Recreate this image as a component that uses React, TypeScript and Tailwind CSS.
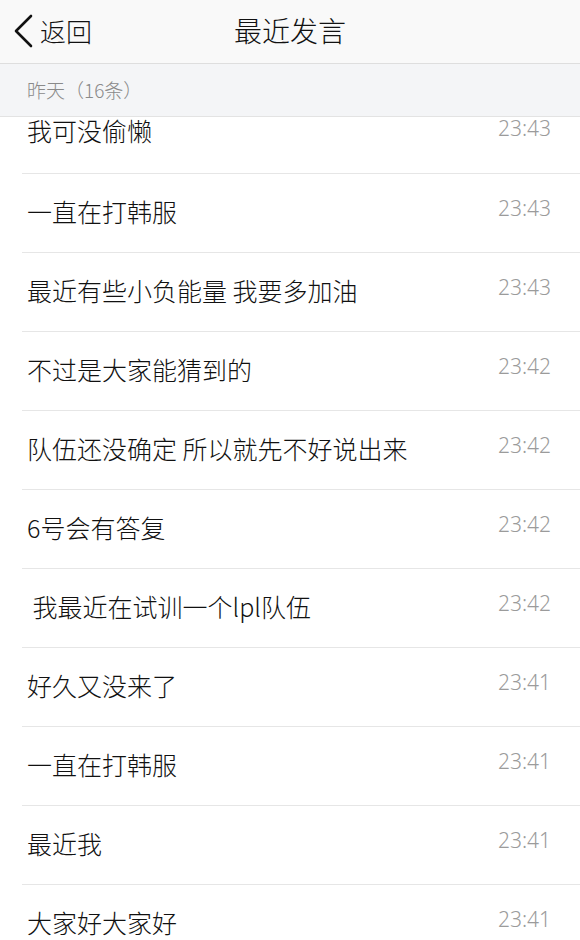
import React from "react";

const rows: { text: string; time: string }[] = [
  { text: "一直在打韩服", time: "23:43" },
  { text: "最近有些小负能量 我要多加油", time: "23:43" },
  { text: "不过是大家能猜到的", time: "23:42" },
  { text: "队伍还没确定 所以就先不好说出来", time: "23:42" },
  { text: "6号会有答复", time: "23:42" },
  { text: " 我最近在试训一个lpl队伍", time: "23:42" },
  { text: "好久又没来了", time: "23:41" },
  { text: "一直在打韩服", time: "23:41" },
  { text: "最近我", time: "23:41" },
  { text: "大家好大家好", time: "23:41" },
];

const cjk = { fontFamily: '"Noto Sans CJK SC", "Noto Sans", sans-serif' };
const num = { fontFamily: '"Noto Sans", "Liberation Sans", sans-serif' };

export default function App() {
  return (
    <div className="w-[580px] h-[940px] overflow-hidden bg-white font-light" style={cjk}>
      <div className="relative h-[64px] bg-[#f9f9f9] border-b border-[#dedede] flex items-center justify-center">
        <div className="absolute left-[12px] top-0 h-full flex items-center gap-[6px]">
          <svg width="22" height="34" viewBox="0 0 22 34" className="mt-[-2px]">
            <path d="M19 2 L4 17 L19 32" fill="none" stroke="#111" strokeWidth="2.6" strokeLinecap="round" strokeLinejoin="round" />
          </svg>
          <span className="text-[26px] text-[#111] leading-none mt-[-2px]">返回</span>
        </div>
        <span className="text-[28px] text-[#111] leading-none mt-[-4px]">最近发言</span>
      </div>
      <div className="h-[53px] bg-[#f4f5f7] border-b border-[#e3e3e3] flex items-center pl-[27px]">
        <span className="text-[19px] text-[#8a8a8a] leading-none mt-[-2px]">昨天（16条）</span>
      </div>
      <div className="h-[56px] flex items-start justify-between pl-[27px] pr-[29px]">
        <span className="text-[25px] text-[#111] leading-none mt-[1px]">我可没偷懒</span>
        <span className="text-[21px] text-[#9b9b9b] leading-none mt-[1px]" style={num}>23:43</span>
      </div>
      <div className="ml-[22px]">
        {rows.map((r, i) => (
          <div key={i} className="h-[79px] border-t border-[#e6e6e6] flex items-center justify-between pl-[5px] pr-[29px]">
            <span className="text-[25px] text-[#111] leading-none whitespace-pre mt-[-4px]">{r.text}</span>
            <span className="text-[21px] text-[#9b9b9b] leading-none mt-[-9px]" style={num}>{r.time}</span>
          </div>
        ))}
      </div>
    </div>
  );
}
